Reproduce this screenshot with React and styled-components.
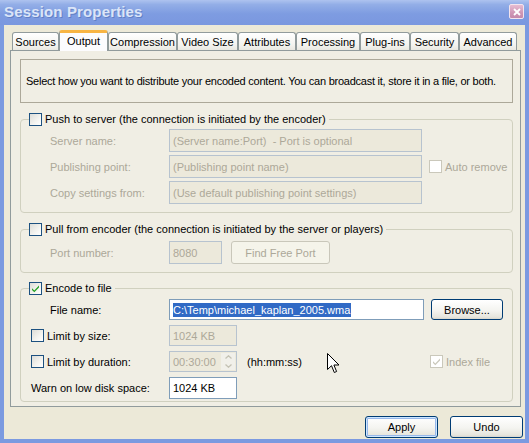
import React from 'react';
import styled, { createGlobalStyle, css } from 'styled-components';

const GlobalStyle = createGlobalStyle`
  html, body { margin: 0; padding: 0; background: #ece9d8; overflow: hidden; }
  body { font-family: "Liberation Sans", Arial, sans-serif; font-size: 11px; color: #000; }
  * { box-sizing: border-box; }
  fieldset { min-width: 0; }
`;

const FRAME = '#7b9ae0';
const DISABLED_TEXT = '#aca899';

const Window = styled.div`
  width: 529px;
  height: 443px;
  display: flex;
  flex-direction: column;
  position: relative;
  overflow: hidden;
`;

const TitleBar = styled.div`
  height: 25px;
  flex: none;
  display: grid;
  grid-template-columns: 1fr 15px;
  align-items: center;
  padding: 0 5px 2px 4px;
  background: linear-gradient(to bottom, #aec3ef 0%, #93aee7 18%, #7e9ce1 55%, #7a97df 100%);
`;

const Title = styled.span`
  font-family: "Liberation Sans", Arial, sans-serif;
  font-weight: bold;
  font-size: 15px;
  letter-spacing: 0.15px;
  color: #dbe5f8;
  text-shadow: 1px 1px 0 rgba(70, 100, 170, 0.5);
`;

const CloseButton = styled.div`
  width: 15px;
  height: 15px;
  border: 1px solid #f3e4ee;
  border-radius: 2px;
  background: linear-gradient(to bottom, #e6bcd2, #cf97b6 60%, #c489ab);
  display: flex;
  align-items: center;
  justify-content: center;
`;

const Body = styled.div`
  flex: 1;
  display: flex;
  flex-direction: column;
  background: #ece9d8;
  border: 4px solid ${FRAME};
  border-top: none;
  padding: 5px 2px 0 6px;
`;

const TabStrip = styled.div`
  display: flex;
  align-items: flex-end;
  height: 20px;
  padding-left: 2px;
  position: relative;
  z-index: 1;
`;

const Tab = styled.div`
  width: ${p => p.$w}px;
  height: 18px;
  display: flex;
  align-items: center;
  justify-content: center;
  border: 1px solid #919b9c;
  border-bottom: none;
  border-radius: 3px 3px 0 0;
  background: linear-gradient(to bottom, #ffffff, #f3f3ef 70%, #e9e8e1);
  white-space: nowrap;
  ${p => p.$active && css`
    height: 21px;
    margin-bottom: -1px;
    padding-bottom: 2px;
    background: #fcfcfe;
    border-top: 3px solid #f8b544;
    border-color: #f8b544 #919b9c #919b9c;
    position: relative;
    z-index: 2;
  `}
`;

const Panel = styled.div`
  height: 357px;
  margin-right: 2px;
  border: 1px solid #919b9c;
  background: #f0eee4;
  padding: 8px 7px 0 9px;
  display: flex;
  flex-direction: column;
`;

const Description = styled.div`
  height: 44px;
  border: 1px solid #aca899;
  display: flex;
  align-items: center;
  padding-left: 5px;
  letter-spacing: -0.24px;
  white-space: nowrap;
`;

const Group = styled.fieldset`
  margin: ${p => p.$mt}px 0 0 0;
  border: 1px solid #d0d0bf;
  border-radius: 4px;
  padding: 0 0 ${p => p.$pb}px 0;
`;

const Legend = styled.legend`
  margin-left: 8px;
  padding: 0 3px 0 0;
  display: flex;
  align-items: center;
  gap: 3px;
  height: 14px;
`;

const FieldGrid = styled.div`
  display: grid;
  grid-template-columns: 119px 253px auto;
  grid-auto-rows: 23px;
  row-gap: 3px;
  align-items: center;
  padding: ${p => p.$pt}px 0 0 29px;
`;

const Rows = styled.div`
  display: flex;
  flex-direction: column;
  gap: 5px;
  padding: ${p => p.$pt}px 0 0 10px;
`;

const Row = styled.div`
  display: flex;
  align-items: center;
  height: ${p => p.$h}px;
`;

const LabelCell = styled.div`
  width: ${p => p.$w}px;
  flex: none;
  display: flex;
  align-items: center;
  gap: 3px;
  padding-left: ${p => p.$pl || 0}px;
`;

const Label = styled.span`
  color: ${p => (p.$disabled ? DISABLED_TEXT : '#000')};
  white-space: nowrap;
`;

const Field = styled.div`
  width: ${p => p.$w}px;
  height: ${p => p.$h || 23}px;
  flex: none;
  display: flex;
  align-items: center;
  padding-left: 3px;
  border: 1px solid ${p => (p.$disabled ? '#b7c3cf' : '#7f9db9')};
  background: ${p => (p.$disabled ? '#ece9db' : '#ffffff')};
  color: ${p => (p.$disabled ? DISABLED_TEXT : '#000')};
  white-space: nowrap;
  overflow: hidden;
  position: relative;
`;

const Selected = styled.span`
  background: #316ac5;
  color: #fff;
  padding: 1px 1px 1px 0;
`;

const SpinArrows = styled.div`
  position: absolute;
  right: 1px;
  top: 1px;
  bottom: 1px;
  width: 14px;
  display: flex;
  flex-direction: column;
  background: #f1f0ea;
`;

const SpinHalf = styled.div`
  flex: 1;
  display: flex;
  align-items: center;
  justify-content: center;
`;

const Button = styled.div`
  width: ${p => p.$w}px;
  height: ${p => p.$h || 22}px;
  margin-left: ${p => p.$ml || 0}px;
  flex: none;
  display: flex;
  align-items: center;
  justify-content: center;
  border-radius: 3px;
  border: 1px solid ${p => (p.$disabled ? '#c9c7ba' : '#003c74')};
  background: ${p => (p.$disabled
    ? '#f5f4ea'
    : 'linear-gradient(to bottom, #ffffff, #f4f4f0 55%, #e6e5dd 90%, #d8d6cc)')};
  color: ${p => (p.$disabled ? DISABLED_TEXT : '#000')};
  box-shadow: ${p => (p.$default ? 'inset 0 0 0 1px #cee7ff, inset 0 0 0 2px #98b8ea' : 'none')};
  white-space: nowrap;
`;

const ButtonRow = styled.div`
  display: flex;
  justify-content: flex-end;
  gap: 12px;
  margin-top: 9px;
`;

const BoxEl = styled.div`
  width: 13px;
  height: 13px;
  flex: none;
  border: 1px solid ${p => (p.$disabled ? '#cac8bb' : '#1c5180')};
  background: ${p => (p.$disabled ? '#ffffff' : 'linear-gradient(135deg, #dcdcd7 0%, #f4f4f0 60%, #ffffff 100%)')};
  display: flex;
  align-items: center;
  justify-content: center;
`;

const SideCell = styled.div`
  display: flex;
  align-items: center;
  gap: 3px;
  margin-left: ${p => (p.$auto ? 'auto' : `${p.$ml}px`)};
  width: ${p => (p.$w ? `${p.$w}px` : 'auto')};
  flex: none;
`;

const Cursor = styled.svg`
  position: absolute;
  left: 327px;
  top: 353px;
  pointer-events: none;
`;

function CheckBox({ checked, disabled }) {
  return (
    <BoxEl $disabled={disabled}>
      {checked && (
        <svg width="9" height="9" viewBox="0 0 9 9">
          <path d="M1 4.2 L3.3 6.5 L8 1.6 L8 3.6 L3.3 8.3 L1 6.1 Z" fill={disabled ? '#cac8bb' : '#21a121'} />
        </svg>
      )}
    </BoxEl>
  );
}

const tabs = [
  ['Sources', 47],
  ['Output', 49],
  ['Compression', 69],
  ['Video Size', 61],
  ['Attributes', 58],
  ['Processing', 64],
  ['Plug-ins', 50],
  ['Security', 49],
  ['Advanced', 58],
];

export default function App() {
  return (
    <Window>
      <GlobalStyle />
      <TitleBar>
        <Title>Session Properties</Title>
        <CloseButton>
          <svg width="8" height="8" viewBox="0 0 8 8">
            <path d="M1 1 L7 7 M7 1 L1 7" stroke="#fff" strokeWidth="1.8" />
          </svg>
        </CloseButton>
      </TitleBar>
      <Body>
        <TabStrip>
          {tabs.map(([name, w], i) => (
            <Tab key={name} $w={w} $active={i === 1}>{name}</Tab>
          ))}
        </TabStrip>
        <Panel>
          <Description>
            Select how you want to distribute your encoded content. You can broadcast it, store it in a file, or both.
          </Description>

          <Group $mt={9} $pb={8}>
            <Legend>
              <CheckBox />
              <Label>Push to server (the connection is initiated by the encoder)</Label>
            </Legend>
            <FieldGrid $pt={3}>
              <Label $disabled>Server name:</Label>
              <Field $w={253} $disabled>(Server name:Port)&nbsp; - Port is optional</Field>
              <span />
              <Label $disabled>Publishing point:</Label>
              <Field $w={253} $disabled>(Publishing point name)</Field>
              <SideCell $ml={7}>
                <CheckBox disabled />
                <Label $disabled>Auto remove</Label>
              </SideCell>
              <Label $disabled>Copy settings from:</Label>
              <Field $w={253} $disabled>(Use default publishing point settings)</Field>
              <span />
            </FieldGrid>
          </Group>

          <Group $mt={9} $pb={8}>
            <Legend>
              <CheckBox />
              <Label>Pull from encoder (the connection is initiated by the server or players)</Label>
            </Legend>
            <Rows $pt={5}>
              <Row $h={23}>
                <LabelCell $w={138} $pl={19}>
                  <Label $disabled>Port number:</Label>
                </LabelCell>
                <Field $w={53} $disabled>8080</Field>
                <Button $w={99} $h={23} $ml={9} $disabled>Find Free Port</Button>
              </Row>
            </Rows>
          </Group>

          <Group $mt={8} $pb={2}>
            <Legend>
              <CheckBox checked />
              <Label>Encode to file</Label>
            </Legend>
            <Rows $pt={4}>
              <Row $h={21}>
                <LabelCell $w={138} $pl={19}>
                  <Label>File name:</Label>
                </LabelCell>
                <Field $w={255} $h={21}>
                  <Selected>C:\Temp\michael_kaplan_2005.wma</Selected>
                </Field>
                <Button $w={72} $h={21} $ml={7}>Browse...</Button>
              </Row>
              <Row $h={21}>
                <LabelCell $w={138}>
                  <CheckBox />
                  <Label>Limit by size:</Label>
                </LabelCell>
                <Field $w={68} $h={21} $disabled>1024 KB</Field>
              </Row>
              <Row $h={21}>
                <LabelCell $w={138}>
                  <CheckBox />
                  <Label>Limit by duration:</Label>
                </LabelCell>
                <Field $w={68} $h={21} $disabled>
                  00:30:00
                  <SpinArrows>
                    <SpinHalf>
                      <svg width="7" height="4" viewBox="0 0 7 4">
                        <path d="M0.5 3.5 L3.5 0.8 L6.5 3.5" fill="none" stroke="#c4c2b4" strokeWidth="1.3" />
                      </svg>
                    </SpinHalf>
                    <SpinHalf>
                      <svg width="7" height="4" viewBox="0 0 7 4">
                        <path d="M0.5 0.5 L3.5 3.2 L6.5 0.5" fill="none" stroke="#c4c2b4" strokeWidth="1.3" />
                      </svg>
                    </SpinHalf>
                  </SpinArrows>
                </Field>
                <SideCell $ml={10}>
                  <Label>(hh:mm:ss)</Label>
                </SideCell>
                <SideCell $auto $w={82}>
                  <CheckBox checked disabled />
                  <Label $disabled>Index file</Label>
                </SideCell>
              </Row>
              <Row $h={22}>
                <LabelCell $w={138}>
                  <Label>Warn on low disk space:</Label>
                </LabelCell>
                <Field $w={68} $h={22}>1024 KB</Field>
              </Row>
            </Rows>
          </Group>
        </Panel>
        <ButtonRow>
          <Button $w={73} $default>Apply</Button>
          <Button $w={73}>Undo</Button>
        </ButtonRow>
      </Body>
      <Cursor width="13" height="21" viewBox="0 0 13 21">
        <path d="M0.5 0.5 L0.5 16.5 L4.5 12.7 L7.3 19.5 L9.6 18.5 L6.9 12 L12 12 Z" fill="#fff" stroke="#000" strokeWidth="1" strokeLinejoin="miter" />
      </Cursor>
    </Window>
  );
}
